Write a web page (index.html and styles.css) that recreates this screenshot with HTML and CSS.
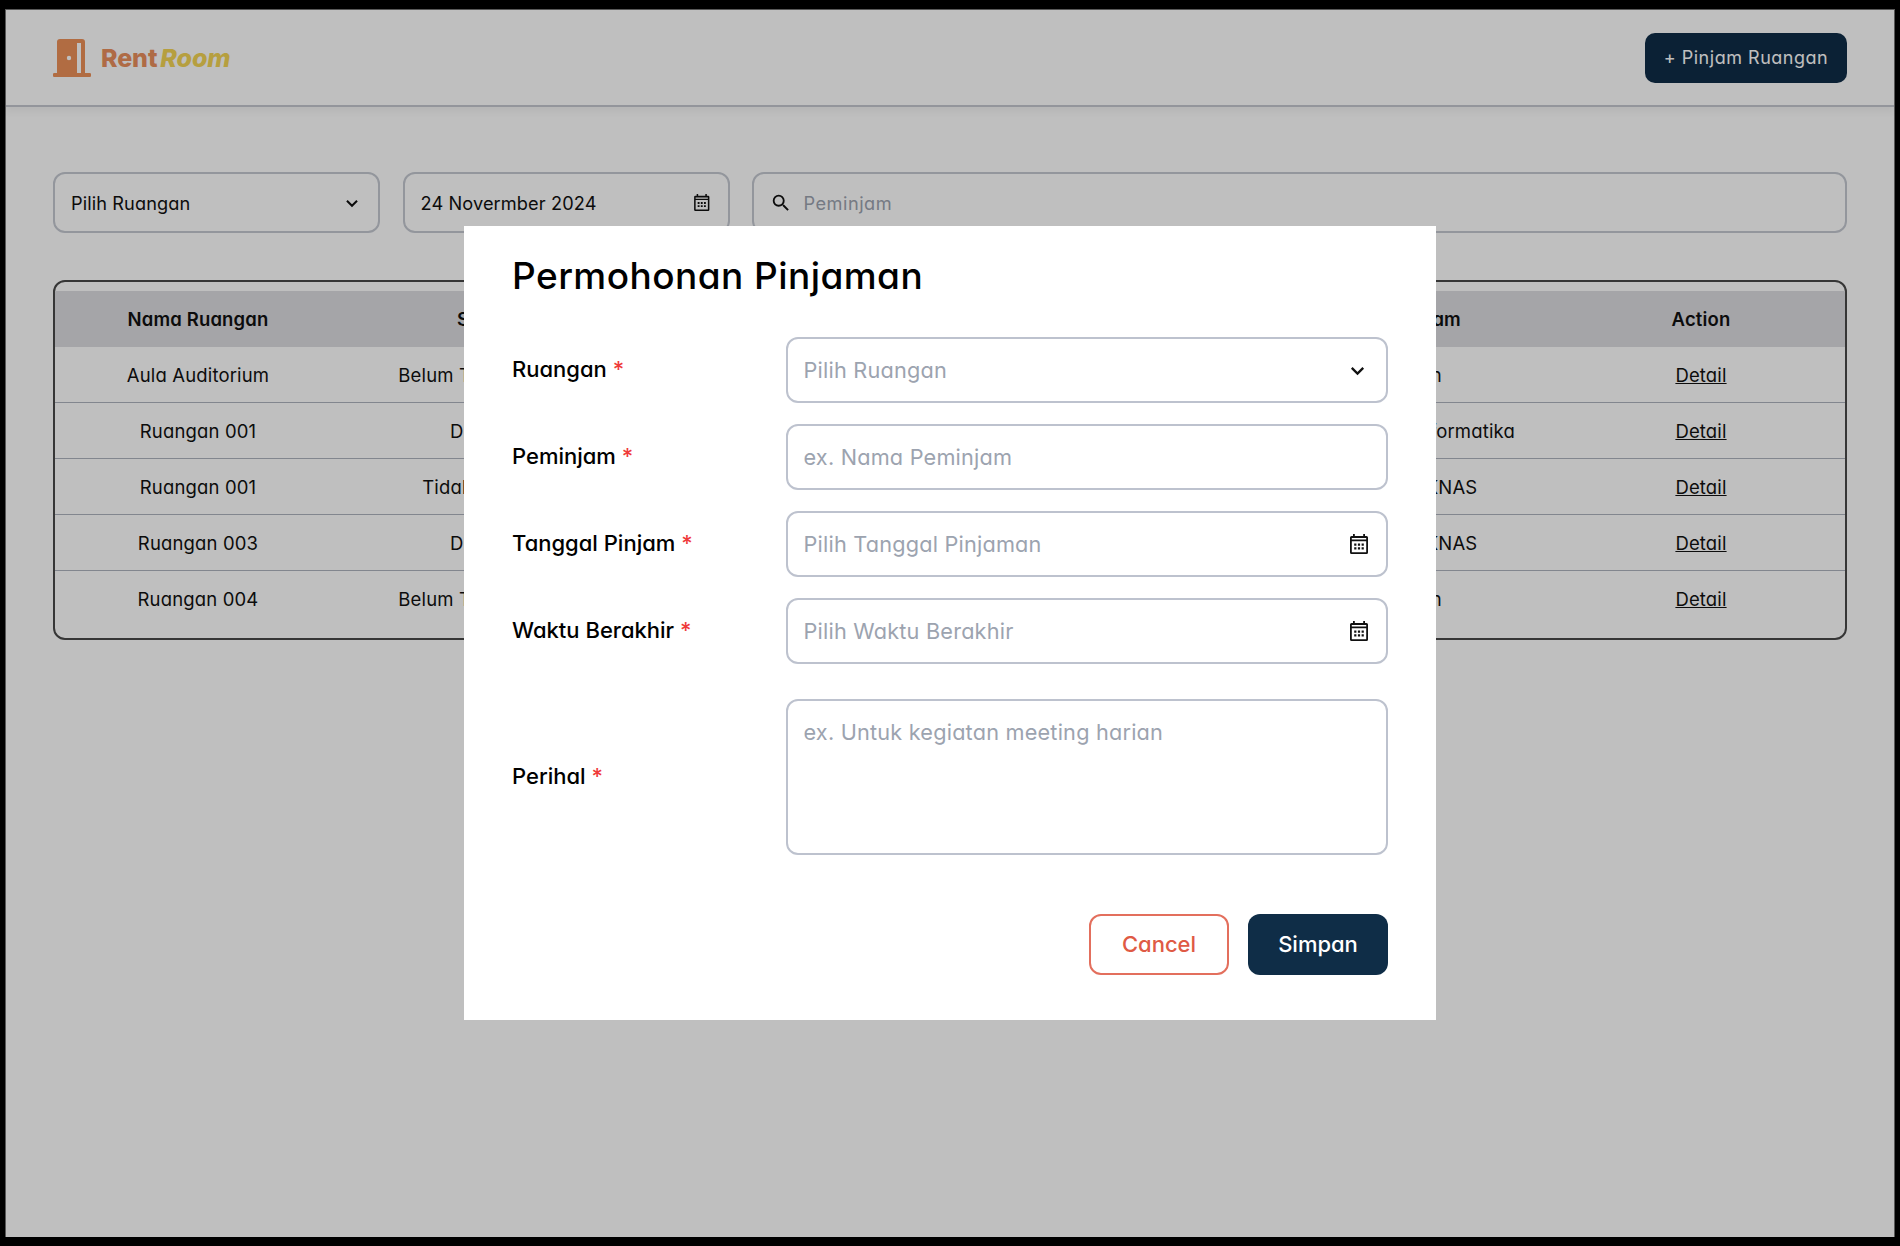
FILE: index.html
```html
<!DOCTYPE html>
<html lang="id">
<head>
<meta charset="utf-8">
<title>RentRoom</title>
<link rel="stylesheet" href="styles.css">
</head>
<body>
<div class="app">
  <header class="topbar">
    <div class="brand">
      <svg class="door" viewBox="0 0 38 38" aria-hidden="true"><path fill="#ec9059" fill-rule="evenodd" d="M4 34V3a3 3 0 0 1 3-3h22a3 3 0 0 1 3 3v31h4.600a2 2 0 0 1 0 4H1.400a2 2 0 0 1 0-4H4zM24 4v30h4V4h-4zM18.200 19a2.200 2.200 0 1 0-4.400 0 2.200 2.200 0 0 0 4.400 0z"/></svg>
      <span class="brand-text"><span class="rent">Rent</span><em class="room">Room</em></span>
    </div>
    <button class="cta">+ Pinjam Ruangan</button>
  </header>
  <main class="content">
    <section class="filters">
      <div class="filter filter-fixed"><span>Pilih Ruangan</span>
        <svg class="ico-s" viewBox="0 0 24 24"><path d="M6.500 9.500 12 15l5.500-5.500" fill="none" stroke="#111" stroke-width="2.200"/></svg></div>
      <div class="filter filter-fixed"><span>24 Novermber 2024</span>
        <svg class="cal cal-small" viewBox="0 0 18 20"><path fill="#111" fill-rule="evenodd" d="M3 0h1.800v2h8.400V0H15v2h1.500A1.500 1.500 0 0 1 18 3.500v15a1.500 1.500 0 0 1-1.500 1.500h-15A1.500 1.500 0 0 1 0 18.500v-15A1.500 1.500 0 0 1 1.500 2H3V0zM1.800 4v1.500h14.400V4H1.800zm0 3.200v11h14.400v-11H1.800zM4.200 9.500h2.200v2.200H4.200zM7.900 9.500h2.200v2.200H7.900zM11.600 9.500h2.200v2.200h-2.200zM4.200 13.200h2.200v2.200H4.200zM7.900 13.200h2.200v2.200H7.900zM11.600 13.200h2.200v2.200h-2.200z"/></svg></div>
      <div class="filter filter-grow">
        <svg class="ico-search" viewBox="0 0 24 24"><path fill="#111" d="M15.500 14h-.79l-.28-.27A6.470 6.470 0 0 0 16 9.500 6.500 6.500 0 1 0 9.500 16c1.610 0 3.090-.59 4.230-1.570l.27.28v.79l5 4.990L20.490 19l-4.990-5zm-6 0C7.010 14 5 11.990 5 9.500S7.010 5 9.500 5 14 7.010 14 9.500 11.990 14 9.500 14z"/></svg>
        <span class="muted">Peminjam</span></div>
    </section>
    <section class="table-wrap">
      <div class="row head"><div>Nama Ruangan</div><div>Status</div><div></div><div></div><div>Peminjam</div><div>Action</div></div>
      <div class="row"><div>Aula Auditorium</div><div>Belum Terverifikasi</div><div></div><div></div><div>Aman</div><div><a href="#">Detail</a></div></div>
      <div class="row"><div>Ruangan 001</div><div>Dipakai</div><div></div><div></div><div>Himpunan Informatika</div><div><a href="#">Detail</a></div></div>
      <div class="row"><div>Ruangan 001</div><div>Tidak Dipakai</div><div></div><div></div><div>HIMTIK KNAS</div><div><a href="#">Detail</a></div></div>
      <div class="row"><div>Ruangan 003</div><div>Dipakai</div><div></div><div></div><div>HIMTIK KNAS</div><div><a href="#">Detail</a></div></div>
      <div class="row"><div>Ruangan 004</div><div>Belum Terverifikasi</div><div></div><div></div><div>Aman</div><div><a href="#">Detail</a></div></div>
    </section>
  </main>
</div>
<div class="overlay">
  <form class="modal">
    <h1 class="modal-title">Permohonan Pinjaman</h1>
    <div class="fields">
      <div class="field"><label>Ruangan <b>*</b></label>
        <div class="control"><span>Pilih Ruangan</span><svg class="ico-l" viewBox="0 0 24 24"><path d="M6.500 9.500 12 15l5.500-5.500" fill="none" stroke="#111" stroke-width="2.200"/></svg></div></div>
      <div class="field"><label>Peminjam <b>*</b></label>
        <div class="control"><span>ex. Nama Peminjam</span></div></div>
      <div class="field"><label>Tanggal Pinjam <b>*</b></label>
        <div class="control"><span>Pilih Tanggal Pinjaman</span><svg class="cal" viewBox="0 0 18 20"><path fill="#111" fill-rule="evenodd" d="M3 0h1.800v2h8.400V0H15v2h1.500A1.500 1.500 0 0 1 18 3.500v15a1.500 1.500 0 0 1-1.500 1.500h-15A1.500 1.500 0 0 1 0 18.500v-15A1.500 1.500 0 0 1 1.500 2H3V0zM1.800 4v1.500h14.400V4H1.800zm0 3.200v11h14.400v-11H1.800zM4.200 9.500h2.200v2.200H4.200zM7.900 9.500h2.200v2.200H7.900zM11.600 9.500h2.200v2.200h-2.200zM4.200 13.200h2.200v2.200H4.200zM7.900 13.200h2.200v2.200H7.900zM11.600 13.200h2.200v2.200h-2.200z"/></svg></div></div>
      <div class="field"><label>Waktu Berakhir <b>*</b></label>
        <div class="control"><span>Pilih Waktu Berakhir</span><svg class="cal" viewBox="0 0 18 20"><path fill="#111" fill-rule="evenodd" d="M3 0h1.800v2h8.400V0H15v2h1.500A1.500 1.500 0 0 1 18 3.500v15a1.500 1.500 0 0 1-1.500 1.500h-15A1.500 1.500 0 0 1 0 18.500v-15A1.500 1.500 0 0 1 1.500 2H3V0zM1.800 4v1.500h14.400V4H1.800zm0 3.200v11h14.400v-11H1.800zM4.200 9.500h2.200v2.200H4.200zM7.900 9.500h2.200v2.200H7.900zM11.600 9.500h2.200v2.200h-2.200zM4.200 13.200h2.200v2.200H4.200zM7.900 13.200h2.200v2.200H7.900zM11.600 13.200h2.200v2.200h-2.200z"/></svg></div></div>
      <div class="field field-area"><label>Perihal <b>*</b></label>
        <div class="control area"><span>ex. Untuk kegiatan meeting harian</span></div></div>
    </div>
    <div class="actions">
      <button type="button" class="btn btn-cancel">Cancel</button>
      <button type="button" class="btn btn-save">Simpan</button>
    </div>
  </form>
</div>
</body>
</html>
```
FILE: styles.css
```css
* { box-sizing: border-box; }
html, body { height: 100%; }
body {
  margin: 0;
  padding: 9px 5px;
  background: #000;
  font-family: Inter, "Noto Sans", sans-serif;
  font-feature-settings: "cv11" 1;
  color: #111;
}
.app {
  height: 1228px;
  background: #fff;
  border-left: 1px solid #777;
  border-top: 1px solid #777;
  border-right: 1px solid #777;
  display: flex;
  flex-direction: column;
}
.topbar {
  height: 97px;
  flex: none;
  display: flex;
  align-items: center;
  justify-content: space-between;
  padding: 0 47px;
  border-bottom: 2px solid #c4c7cf;
  box-shadow: 0 5px 7px rgba(0,0,0,.05);
}
.brand { display: flex; align-items: center; gap: 10px; }
.door { width: 38px; height: 38px; display: block; }
.brand-text { font-size: 25px; font-weight: 800; letter-spacing: -.1px; }
.rent { color: #ea8f5c; }
.room { color: #f3d455; margin-left: 3px; }
.cta {
  width: 202px; height: 50px;
  border: 0; border-radius: 10px;
  background: #0f2d47;
  color: #fff;
  font: 400 18px Inter, sans-serif;
  font-feature-settings: "cv11" 1;
  letter-spacing: .52px;
}
.content { padding: 65px 47px 0; }
.filters { display: flex; gap: 22.5px; }
.filter {
  height: 61px;
  display: flex;
  align-items: center;
  padding: 0 15.5px 0 16px;
  border: 2px solid #c4c8d1;
  border-radius: 12px;
  font-size: 18.200px;
  letter-spacing: .1px;
  font-weight: 400;
}
.filter-fixed { width: 327px; justify-content: space-between; }
.filter-grow { flex: 1; gap: 12px; }
.muted { color: #9ca3af; letter-spacing: .5px; }
.ico-s { width: 22px; height: 22px; flex: none; }
.cal { width: 18px; height: 20px; flex: none; }
.cal-small { width: 15.500px; height: 17px; margin-right: 2.500px; }
.ico-l { width: 25px; height: 25px; flex: none; margin-right: -1.500px; }
.ico-search { width: 22px; height: 22px; flex: none; margin-left: -.5px; }
.table-wrap {
  margin-top: 47px;
  border: 2px solid #484848;
  border-radius: 12px;
  padding: 9px 0 11px;
  overflow: hidden;
}
.row {
  display: grid;
  grid-template-columns: 286px 285px 349px 300px 282px 1fr;
  height: 56px;
  align-items: center;
  text-align: center;
  font-size: 18.500px;
  letter-spacing: .15px;
  border-bottom: 1px solid #aeb3be;
}
.row:last-child { border-bottom: 0; }
.row > div { white-space: nowrap; }
.row a { color: #111; text-decoration: underline; }
.head { border-bottom: 0; background: #dcdde1; font-weight: 600; }
.head > div:nth-child(2) { padding-left: 6px; }
.overlay {
  position: fixed;
  inset: 0;
  background: rgba(0,0,0,.25);
  display: flex;
  align-items: center;
  justify-content: center;
}
.modal {
  width: 972px;
  height: 794px;
  background: #fff;
  padding: 25px 48px 0 48px;
  display: flex;
  flex-direction: column;
}
.modal-title {
  margin: 0;
  font-size: 37px;
  line-height: 50px;
  font-weight: 500;
  color: #000;
  letter-spacing: .45px;
}
.fields { margin-top: 36px; display: flex; flex-direction: column; gap: 21px; }
.field { display: grid; grid-template-columns: 274px 1fr; align-items: center; }
label { font-size: 22px; font-weight: 500; color: #000; padding-bottom: 2px; }
label b { color: #ef3a3a; font-weight: 500; }
.control {
  height: 66px;
  display: flex;
  align-items: center;
  justify-content: space-between;
  padding: 0 18px 0 15.5px;
  border: 2px solid #bdc2ce;
  border-radius: 12px;
  color: #9ca3af;
  font-size: 21.700px;
  letter-spacing: .2px;
}
.field-area { margin-top: 14px; }
.area { height: 156px; align-items: flex-start; padding-top: 17.500px; }
.actions { margin-top: 59px; display: flex; justify-content: flex-end; gap: 19px; }
.btn {
  width: 140px; height: 61px;
  border-radius: 12px;
  padding: 0 0 2px;
  font: 500 22px Inter, sans-serif;
  font-feature-settings: "cv11" 1;
}
.btn-cancel { background: #fff; border: 2px solid #e36f5d; color: #df5a45; }
.btn-save { background: #0f2d47; border: 0; color: #fff; }
```
